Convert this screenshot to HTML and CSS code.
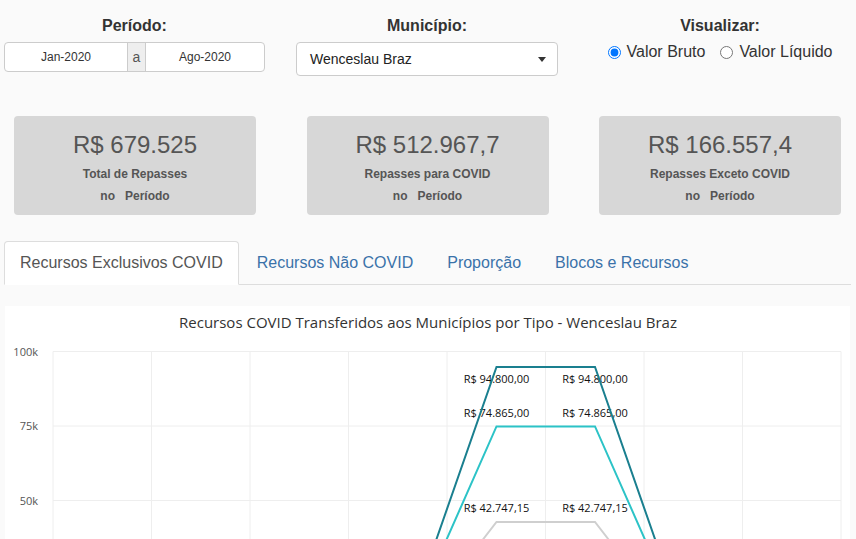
FILE: index.html
```html
<!DOCTYPE html>
<html lang="pt-BR">
<head>
<meta charset="utf-8">
<title>Repasses</title>
<link rel="stylesheet" href="styles.css">
</head>
<body>
<div class="filters">
  <div class="filter f-period">
    <div class="filter-label">Período:</div>
    <div class="input-group">
      <div class="ig-input ig-left">Jan-2020</div>
      <div class="ig-addon">a</div>
      <div class="ig-input ig-right">Ago-2020</div>
    </div>
  </div>
  <div class="filter f-mun">
    <div class="filter-label">Município:</div>
    <div class="select">
      <span>Wenceslau Braz</span>
      <span class="caret"></span>
    </div>
  </div>
  <div class="filter f-vis">
    <div class="filter-label">Visualizar:</div>
    <div class="radios">
      <label class="radio"><input type="radio" name="v" checked>Valor Bruto</label>
      <label class="radio"><input type="radio" name="v">Valor Líquido</label>
    </div>
  </div>
</div>

<div class="cards">
  <div class="card">
    <div class="card-value">R$ 679.525</div>
    <div class="card-sub">Total de Repasses</div>
    <div class="card-sub">no &nbsp; Período</div>
  </div>
  <div class="card">
    <div class="card-value">R$ 512.967,7</div>
    <div class="card-sub">Repasses para COVID</div>
    <div class="card-sub">no &nbsp; Período</div>
  </div>
  <div class="card">
    <div class="card-value">R$ 166.557,4</div>
    <div class="card-sub">Repasses Exceto COVID</div>
    <div class="card-sub">no &nbsp; Período</div>
  </div>
</div>

<ul class="tabs">
  <li class="tab active"><a>Recursos Exclusivos COVID</a></li>
  <li class="tab"><a>Recursos Não COVID</a></li>
  <li class="tab"><a>Proporção</a></li>
  <li class="tab"><a>Blocos e Recursos</a></li>
</ul>

<div class="chart">
  <svg class="chart-svg" width="845" height="400" viewBox="0 0 845 400">
    <text class="chart-title" x="423" y="22" text-anchor="middle">Recursos COVID Transferidos aos Municípios por Tipo - Wenceslau Braz</text>
    <g class="grid">
      <line x1="48" y1="45.5" x2="836" y2="45.5"/>
      <line x1="48" y1="120" x2="836" y2="120"/>
      <line x1="48" y1="194.5" x2="836" y2="194.5"/>
      <line x1="48" y1="269" x2="836" y2="269"/>
      <line x1="48" y1="45.5" x2="48" y2="343.5"/>
      <line x1="146.5" y1="45.5" x2="146.5" y2="343.5"/>
      <line x1="245" y1="45.5" x2="245" y2="343.5"/>
      <line x1="343.5" y1="45.5" x2="343.5" y2="343.5"/>
      <line x1="442" y1="45.5" x2="442" y2="343.5"/>
      <line x1="540.5" y1="45.5" x2="540.5" y2="343.5"/>
      <line x1="639" y1="45.5" x2="639" y2="343.5"/>
      <line x1="737.5" y1="45.5" x2="737.5" y2="343.5"/>
      <line x1="836" y1="45.5" x2="836" y2="343.5"/>
    </g>
    <g class="ticks">
      <text x="33" y="50" text-anchor="end">100k</text>
      <text x="33" y="124" text-anchor="end">75k</text>
      <text x="33" y="198.5" text-anchor="end">50k</text>
    </g>
    <polyline class="l-grey" points="97,343.5 196,343.5 294,343.5 393,343.5 491.5,216 590,216 688.5,343.5 787,343.5"/>
    <polyline class="l-light" points="97,343.5 196,343.5 294,343.5 393,343.5 491.5,120.4 590,120.4 688.5,343.5 787,343.5"/>
    <g class="labels">
      <text x="491.5" y="77" text-anchor="middle">R$ 94.800,00</text>
      <text x="590" y="77" text-anchor="middle">R$ 94.800,00</text>
      <text x="491.5" y="111" text-anchor="middle">R$ 74.865,00</text>
      <text x="590" y="111" text-anchor="middle">R$ 74.865,00</text>
      <text x="491.5" y="206" text-anchor="middle">R$ 42.747,15</text>
      <text x="590" y="206" text-anchor="middle">R$ 42.747,15</text>
    </g>
    <polyline class="l-dark" points="97,343.5 196,343.5 294,343.5 393,343.5 491.5,61 590,61 688.5,343.5 787,343.5"/>
  </svg>
</div>
</body>
</html>
```

FILE: styles.css
```css
* { box-sizing: border-box; }

body {
  margin: 0;
  width: 856px;
  background: #fafafa;
  font-family: "Liberation Sans", Arial, sans-serif;
  color: #333;
}

.filters {
  display: grid;
  grid-template-columns: 285px 285px 1fr;
  height: 100px;
  padding-top: 16px;
}

.filter-label {
  font-weight: bold;
  font-size: 16px;
  line-height: 20px;
  text-align: center;
  margin-bottom: 6px;
}

.f-period { margin-left: 4px; width: 261px; }
.f-mun { margin-left: 11px; width: 262px; }
.f-vis { padding-left: 14px; }

.input-group {
  display: flex;
  height: 30px;
  border: 1px solid #ccc;
  border-radius: 4px;
  background: #fff;
  font-size: 12px;
  line-height: 28px;
  color: #333;
  overflow: hidden;
}

.ig-input { text-align: center; }
.ig-left { width: 122px; }
.ig-right { flex: 1; }

.ig-addon {
  width: 19px;
  background: #eee;
  border-left: 1px solid #ccc;
  border-right: 1px solid #ccc;
  text-align: center;
  font-size: 14px;
  color: #555;
}

.select {
  display: flex;
  align-items: center;
  justify-content: space-between;
  height: 34px;
  padding: 0 11px 0 13px;
  border: 1px solid #ccc;
  border-radius: 4px;
  background: #fff;
  font-size: 14px;
  color: #222;
}

.caret {
  width: 0;
  height: 0;
  border-top: 5px solid #333;
  border-left: 4.5px solid transparent;
  border-right: 4.5px solid transparent;
  margin-top: 1px;
}

.radios {
  display: flex;
  justify-content: center;
  gap: 15px;
  font-size: 16px;
  line-height: 20px;
}

.radio {
  display: flex;
  align-items: center;
  color: #333;
}

.radio input {
  width: 13px;
  height: 13px;
  margin: 0 6px 0 0;
}

.cards {
  display: grid;
  grid-template-columns: repeat(3, 242px);
  column-gap: 50.5px;
  padding: 16px 0 0 14px;
}

.card {
  height: 99px;
  padding-top: 14px;
  background: #d7d7d7;
  border-radius: 4px;
  text-align: center;
  color: #555;
}

.card-value {
  font-size: 24px;
  line-height: 30px;
  margin-bottom: 3px;
}

.card-sub {
  font-size: 12px;
  font-weight: bold;
  line-height: 22px;
}

.tabs {
  display: flex;
  list-style: none;
  margin: 26px 5px 0 4px;
  padding: 0;
  border-bottom: 1px solid #ddd;
}

.tab {
  margin-right: 2px;
  margin-bottom: -1px;
}

.tab a {
  display: block;
  padding: 10px 15px;
  font-size: 16px;
  line-height: 22px;
  border: 1px solid transparent;
  border-radius: 4px 4px 0 0;
  color: #3a72a9;
}

.tab.active a {
  color: #555;
  background: #fff;
  border-color: #ddd #ddd transparent;
}

.chart {
  margin: 21px 6px 0 5px;
  height: 400px;
  background: #fff;
}

.chart-svg { display: block; }

.chart-title {
  font-family: "Open Sans", sans-serif;
  font-size: 15px;
  fill: #333;
}

.grid line {
  stroke: #eee;
  stroke-width: 1;
}

.ticks text {
  font-family: "Open Sans", sans-serif;
  font-size: 11px;
  fill: #555;
}

.labels text {
  font-family: "Open Sans", sans-serif;
  font-size: 11px;
  fill: #111;
}

.l-dark, .l-light, .l-grey {
  fill: none;
  stroke-width: 2;
  stroke-linejoin: miter;
}

.l-dark { stroke: #1a7f8f; }
.l-light { stroke: #2cc3c7; }
.l-grey { stroke: #cfcfcf; }
```
